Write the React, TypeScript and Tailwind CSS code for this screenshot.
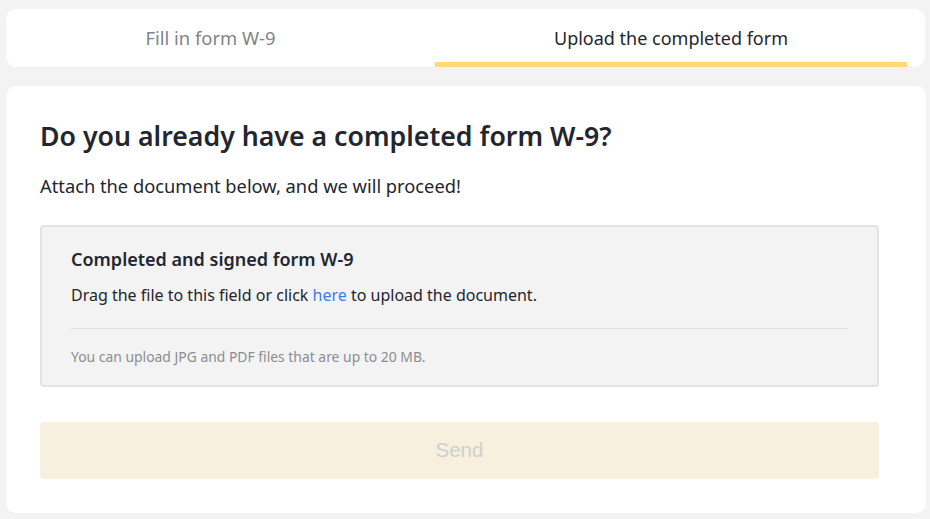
export default function App() {
  const font = { fontFamily: '"Noto Sans", Roboto, sans-serif' };
  return (
    <div className="min-h-[519px] w-[930px] bg-[#f3f3f3] pt-[9px] pl-[6px]" style={font}>
      <div className="flex h-[58px] w-[919px] overflow-hidden rounded-[10px] bg-white pr-[18px]">
        <div className="flex w-[429px] items-center justify-center pr-[20px] text-[18.4px] text-[#80848a]">
          Fill in form W-9
        </div>
        <div className="flex flex-1 flex-col">
          <div className="flex flex-1 items-center justify-center pt-[5px] text-[18px] text-[#23262f]">
            Upload the completed form
          </div>
          <div className="h-[5px] bg-[#fdd97a]" />
        </div>
      </div>

      <div className="mt-[19px] w-[920px] rounded-[10px] bg-white pb-[34px] pl-[34px] pr-[47px] pt-[33px]">
        <h1 className="text-[26.7px] font-semibold leading-[34px] text-[#23262f]">
          Do you already have a completed form W-9?
        </h1>
        <p className="mt-[21px] text-[18.3px] leading-[24px] text-[#23262f]">
          Attach the document below, and we will proceed!
        </p>

        <div className="mt-[27px] rounded-[4px] border-2 border-[#e3e3e3] bg-[#f3f3f3] px-[29px] pb-[19px] pt-[20px]">
          <div className="text-[18px] font-semibold leading-[24px] text-[#23262f]">
            Completed and signed form W-9
          </div>
          <div className="mt-[13px] text-[16px] leading-[22px] text-[#23262f]">
            Drag the file to this field or click <span className="text-[#3e7bf0]">here</span> to upload the document.
          </div>
          <div className="mt-[22px] h-px bg-[#e0e0e0]" />
          <div className="mt-[19px] text-[13.9px] leading-[18px] text-[#8b8d91]">
            You can upload JPG and PDF files that are up to 20 MB.
          </div>
        </div>

        <button
          className="mt-[35px] flex h-[57px] w-full items-center justify-center rounded-[4px] bg-[#f8f0de] text-[20.5px] text-[#cfcfcf]"
          style={{ fontFamily: '"Liberation Sans", Arial, sans-serif' }}
        >
          Send
        </button>
      </div>
    </div>
  );
}
